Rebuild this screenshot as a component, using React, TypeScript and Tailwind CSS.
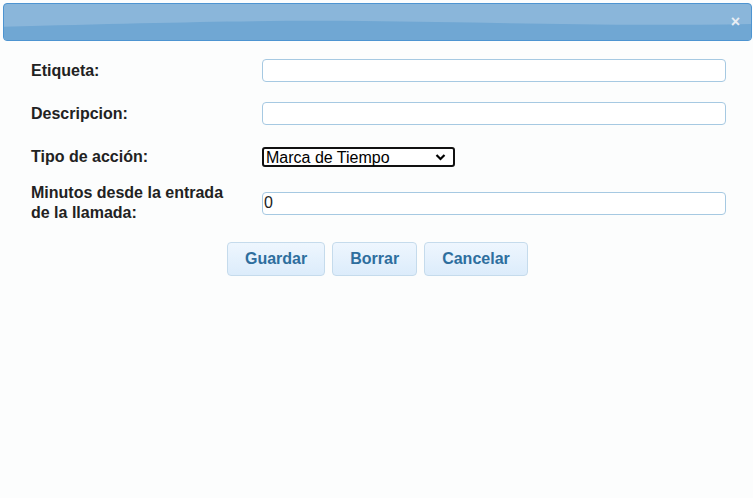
export default function App() {
    return (
        <div className="w-[753px] h-[498px] bg-[#fcfdfd] font-['Liberation_Sans',Arial,sans-serif] text-[#222]">
            <div className="pt-[3px] pl-[3px] pr-[1px]">
                <div className="relative h-[38px] rounded-[4px] border border-[#4d94d1] bg-[#8ab6da] overflow-hidden">
                    <svg className="absolute inset-0 w-full h-full" viewBox="0 0 749 38" preserveAspectRatio="none">
                        <path d="M0 24 C 150 20, 250 17, 360 18 C 480 19, 600 24, 749 21 L 749 38 L 0 38 Z" fill="#70a7d3" />
                    </svg>
                    <span className="absolute right-[11px] top-[10px] text-[16px] font-bold text-[#e8eef4] leading-none">×</span>
                </div>
            </div>
            <div className="pt-[8px] pl-[31px]">
                <div className="flex items-center h-[43px]">
                    <label className="w-[231px] text-[16px] font-bold">Etiqueta:</label>
                    <input type="text" className="w-[464px] h-[23px] rounded-[4px] border border-[#a6c9e2] bg-white outline-none px-[2px] text-[16px]" />
                </div>
                <div className="flex items-center h-[43px]">
                    <label className="w-[231px] text-[16px] font-bold">Descripcion:</label>
                    <input type="text" className="w-[464px] h-[23px] rounded-[4px] border border-[#a6c9e2] bg-white outline-none px-[2px] text-[16px]" />
                </div>
                <div className="flex items-center h-[43px]">
                    <label className="w-[231px] text-[16px] font-bold">Tipo de acción:</label>
                    <div className="relative w-[193px] h-[20px] rounded-[3px] border-2 border-[#111] bg-white">
                        <span className="absolute left-[2px] top-[-1px] text-[16px] leading-[20px] text-black">Marca de Tiempo</span>
                        <svg className="absolute right-[7px] top-[4px]" width="11" height="8" viewBox="0 0 11 8">
                            <path d="M1.5 2 L5.5 6 L9.5 2" fill="none" stroke="#000" strokeWidth="2.2" />
                        </svg>
                    </div>
                </div>
                <div className="flex items-center h-[50px]">
                    <label className="w-[231px] text-[16px] font-bold leading-[20px]">Minutos desde la entrada<br />de la llamada:</label>
                    <input type="text" defaultValue="0" className="w-[464px] h-[23px] rounded-[4px] border border-[#a6c9e2] bg-white outline-none px-[1px] text-[16px] text-[#222]" />
                </div>
            </div>
            <div className="flex gap-[7px] pl-[227px] pt-[14px]">
                <button className="h-[34px] px-[17px] rounded-[4px] border border-[#c5dbec] bg-gradient-to-b from-[#eef6fe] to-[#dcecfb] text-[16px] font-bold text-[#2e6e9e]">Guardar</button>
                <button className="h-[34px] px-[17px] rounded-[4px] border border-[#c5dbec] bg-gradient-to-b from-[#eef6fe] to-[#dcecfb] text-[16px] font-bold text-[#2e6e9e]">Borrar</button>
                <button className="h-[34px] px-[17px] rounded-[4px] border border-[#c5dbec] bg-gradient-to-b from-[#eef6fe] to-[#dcecfb] text-[16px] font-bold text-[#2e6e9e]">Cancelar</button>
            </div>
        </div>
    )
}
